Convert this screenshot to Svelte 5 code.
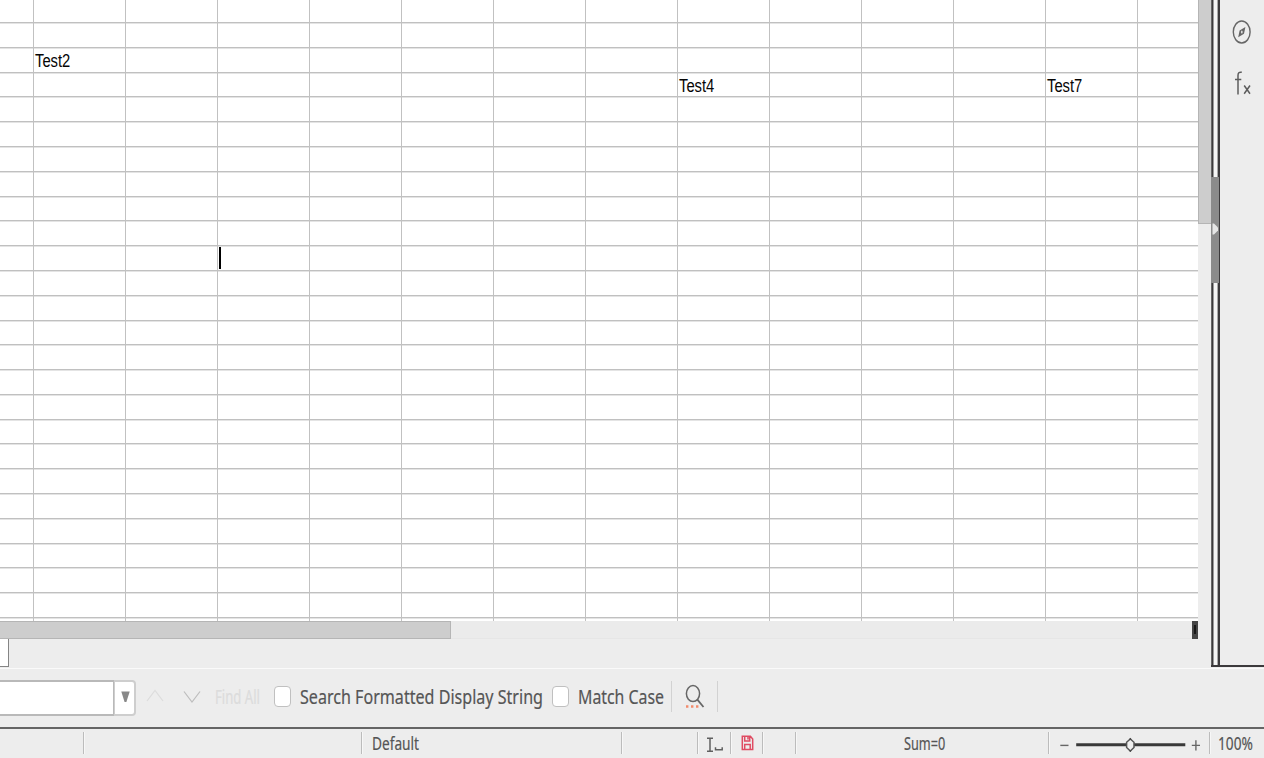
<script>
  const rows = 26;
  const cols = 14;
  const stretch = 1.25;
  const values = { '2-1': 'Test2', '3-8': 'Test4', '3-12': 'Test7' };
  const cells = Array.from({ length: rows * cols }, (_, i) => {
    const r = Math.floor(i / cols);
    const c = i % cols;
    return { id: i, text: values[`${r}-${c}`], cursor: r === 10 && c === 3 };
  });
</script>

{#snippet label(text, width, size, height, baseline)}
  <svg class="label" {width} {height} viewBox="0 0 {width * stretch} {height}" preserveAspectRatio="none" font-size={size}>
    <text x="0" y={baseline} textLength={width * stretch} lengthAdjust="spacingAndGlyphs">{text}</text>
  </svg>
{/snippet}

<div class="window">
  <div class="workspace">
    <div class="sheet">
      <div class="grid">
        {#each cells as cell (cell.id)}
          <div class="cell">
            {#if cell.text}{@render label(cell.text, 35.3, 17.6, 24, 19)}{/if}
            {#if cell.cursor}<i class="caret"></i>{/if}
          </div>
        {/each}
      </div>
      <div class="hscroll"><div class="hthumb"></div><div class="split"><i></i></div></div>
      <div class="tabs"><div class="tab"></div></div>
    </div>
    <div class="vscroll"><div class="vthumb"></div></div>
    <div class="sidebar">
      <div class="rail">
        <div class="handle"><svg width="7" height="12" viewBox="0 0 7 12"><path d="M0.5 0.5H2L6 4.5V7.5L2 11.5H0.5Z" fill="#e6e6e6" /></svg></div>
      </div>
      <div class="deck">
        <svg class="compass" width="20" height="24" viewBox="0 0 20 24" fill="none" stroke="#666" stroke-width="1.4">
          <ellipse cx="9.7" cy="12" rx="8.4" ry="11" />
          <path d="M13.4 7L12 13.7L6.2 17.2L7.6 10.5Z" fill="#666" stroke="none" />
          <ellipse cx="9.8" cy="12" rx="0.9" ry="1.5" fill="#ddd" stroke="none" />
        </svg>
        <svg class="fx" width="20" height="26" viewBox="0 0 20 26" fill="none" stroke="#5d5d5d" stroke-width="1.5">
          <path d="M7.8 1.3C5 0.7 4 2.2 4 4.5V23.5M1 8.5H7.3M10.2 14.5L16 22.7M16 14.5L10.2 22.7" />
        </svg>
      </div>
    </div>
  </div>

  <div class="findbar">
    <div class="combo">
      <div class="input"></div>
      <div class="drop"><svg width="9" height="12" viewBox="0 0 9 12"><path d="M0.3 0.5H8.7L5.4 11H3.6Z" fill="#888" /></svg></div>
    </div>
    <svg class="up" width="18" height="14" viewBox="0 0 18 14" fill="none" stroke="#dcdcdc" stroke-width="1.2"><path d="M1 12L9 1.5L17 12" /></svg>
    <svg class="down" width="18" height="14" viewBox="0 0 18 14" fill="none" stroke="#bdbdbd" stroke-width="1.2"><path d="M1 1.5L9 12L17 1.5" /></svg>
    <div class="findall">{@render label('Find All', 45, 19.5, 28, 21)}</div>
    <div class="check first"></div>
    <div class="formatted">{@render label('Search Formatted Display String', 243, 20, 28, 21)}</div>
    <div class="check second"></div>
    <div class="match">{@render label('Match Case', 86, 20, 28, 21)}</div>
    <div class="rule"></div>
    <svg class="search" width="22" height="26" viewBox="0 0 22 26" fill="none">
      <ellipse cx="9" cy="9.6" rx="6.6" ry="8" stroke="#666" stroke-width="1.5" />
      <path d="M13.4 15.6L19.5 23" stroke="#666" stroke-width="1.8" />
      <path d="M2 22.5H4.4M7 22.5H9.4M12 22.5H14.4" stroke="#f28b6c" stroke-width="2.6" />
    </svg>
    <div class="rule last"></div>
  </div>

  <div class="status">
    <div class="item" style:width="83px"></div>
    <div class="item sep" style:width="278px"></div>
    <div class="item sep" style:width="260px"><div class="default">{@render label('Default', 47, 17.6, 24, 18)}</div></div>
    <div class="item sep" style:width="76px"></div>
    <div class="item sep mode" style:width="33px">
      <svg width="18" height="16" viewBox="0 0 18 16" fill="none" stroke="#606060" stroke-width="1.5"><path d="M1 1.2H7M4 1.2V14.2M1 14.2H7" /><path d="M9.5 10.2V12.8H16.2V10.2" /></svg>
    </div>
    <div class="item sep save" style:width="32px">
      <svg width="13" height="16" viewBox="0 0 13 16" fill="none" stroke="#df4b62" stroke-width="1.5"><path d="M1.3 1.2H9.4L11.7 4V14.5H1.3ZM3.7 1.2V6H8.7V1.2M3.7 14.5V9.4H9.2V14.5M7 2V4.5" /></svg>
    </div>
    <div class="item sep" style:width="33px"></div>
    <div class="item sep" style:width="253px"><div class="sum">{@render label('Sum=0', 41.3, 17.6, 24, 18)}</div></div>
    <div class="item sep zoom" style:width="161px">
      <svg width="145" height="18" viewBox="0 0 145 18" fill="none">
        <path d="M1.3 9.4H9.5" stroke="#666" stroke-width="1.4" />
        <path d="M17.2 8.8H126.3" stroke="#393939" stroke-width="3" />
        <path d="M71.3 3L75 6.3V11.5L71.3 15L67.6 11.5V6.3Z" fill="#eee" stroke="#555" stroke-width="1.5" />
        <path d="M69.8 3.4L71.3 1.7L72.8 3.4ZM69.8 14.4L71.3 16L72.8 14.4Z" fill="#444" />
        <path d="M132.8 9.4H141M136.9 4.3V14.5" stroke="#666" stroke-width="1.4" />
      </svg>
    </div>
    <div class="item sep" style:width="55px"><div class="percent">{@render label('100%', 34.8, 17.6, 24, 18)}</div></div>
  </div>
</div>

<style>
  :global(body) { margin: 0; overflow: hidden; }
  .window { width: 1264px; height: 758px; overflow: hidden; display: flex; flex-direction: column; background: #ededed; font-family: "Noto Sans", sans-serif; color: #555; }
  .window * { box-sizing: border-box; }
  svg { display: block; flex: none; }
  .label { overflow: visible; fill: currentColor; stroke: currentColor; stroke-width: 0.2px; }
  .grid .label { stroke-width: 0; }
  .workspace { display: flex; height: 669px; flex: none; border-bottom: 1px solid #fafafa; }
  .sheet { width: 1198px; flex: none; }
  .grid { height: 621px; overflow: hidden; background: #fff; display: grid; grid-template-columns: 34px repeat(13, 92.04px); grid-template-rows: 23.15px repeat(25, 24.79px); font-family: "Liberation Sans", Arial, sans-serif; color: #050505; }
  .cell { border-right: 1px solid #c1c1c1; border-bottom: 1px solid #c0c0c0; box-shadow: 0 1px #e4e4e4; padding-left: 1px; }
  .caret { display: block; width: 2px; height: 22px; margin-top: 0.5px; background: #000; }
  .hscroll { height: 18px; background: #ebebeb; border-bottom: 1px solid #e6e6e6; display: flex; justify-content: space-between; }
  .hthumb { width: 451px; height: 18px; background: #cdcdcd; border: 1px solid #b5b5b5; border-left: 0; }
  .split { width: 6px; height: 18px; background: #454545; padding: 4px 2px; }
  .split i { display: block; width: 2px; height: 9px; background: #171717; }
  .tabs { height: 29px; }
  .tab { width: 9px; height: 28px; background: #fff; border: solid #858585; border-width: 0 1px 1px 0; }
  .vscroll { width: 13px; height: 668px; flex: none; background: #ededed; }
  .vthumb { width: 13px; height: 224px; background: #cdcdcd; border-left: 1px solid #b5b5b5; border-bottom: 1px solid #b5b5b5; }
  .sidebar { width: 53px; height: 667px; display: flex; border-bottom: 2px solid #3c3a3c; }
  .rail { width: 9px; height: 665px; flex: none; padding-top: 177px; background: linear-gradient(90deg, #666 0 1px, #3c3a3c 1px 2px, #9b9b9b 2px 3px, #f5f5f5 3px 6px, #aaa 6px 7px, #3c3a3c 7px 9px); }
  .handle { width: 8px; height: 106px; padding: 46px 0 0 1px; background: #8b8b8b; }
  .deck { padding: 20px 0 0 12px; }
  .fx { margin: 27px 0 0 2px; }
  .findbar { height: 58px; flex: none; display: flex; align-items: flex-start; }
  .combo { display: flex; width: 136px; height: 36px; margin-top: 11px; flex: none; }
  .input { width: 114px; background: #fff; border: solid #b9b9b9; border-width: 2px 1px 2px 0; }
  .drop { width: 22px; background: #fff; border: 2px solid #cecece; border-left-width: 1px; border-radius: 0 4px 4px 0; padding: 9px 0 0 6px; }
  .up { margin: 20px 0 0 10px; }
  .down { margin: 21px 0 0 19px; }
  .findall { margin: 14px 0 0 14px; color: #dcdcdc; }
  .check { flex: none; width: 17px; height: 21px; margin-top: 17px; background: #fff; border: 1.5px solid #c0c0c0; border-radius: 4px; }
  .first { margin-left: 14px; }
  .formatted { margin: 14px 0 0 9px; }
  .second { margin-left: 9px; }
  .match { margin: 14px 0 0 9px; }
  .rule { width: 1px; height: 31px; margin: 12px 0 0 7px; background: #d2d2d2; }
  .search { margin: 15px 0 0 12px; }
  .last { margin-left: 11px; }
  .status { height: 31px; flex: none; border-top: 2px solid #656565; display: flex; align-items: flex-start; }
  .item { height: 22px; flex: none; margin-top: 3px; }
  .sep { border-left: 1px solid #bcbcbc; box-shadow: inset 1px 0 #f7f7f7; }
  .default { padding-left: 9.5px; }
  .sum { padding-left: 107.5px; }
  .percent { padding-left: 8px; }
  .mode { padding: 5px 0 0 8px; }
  .save { padding: 3px 0 0 10px; }
  .zoom { padding: 4px 0 0 10px; }
</style>
